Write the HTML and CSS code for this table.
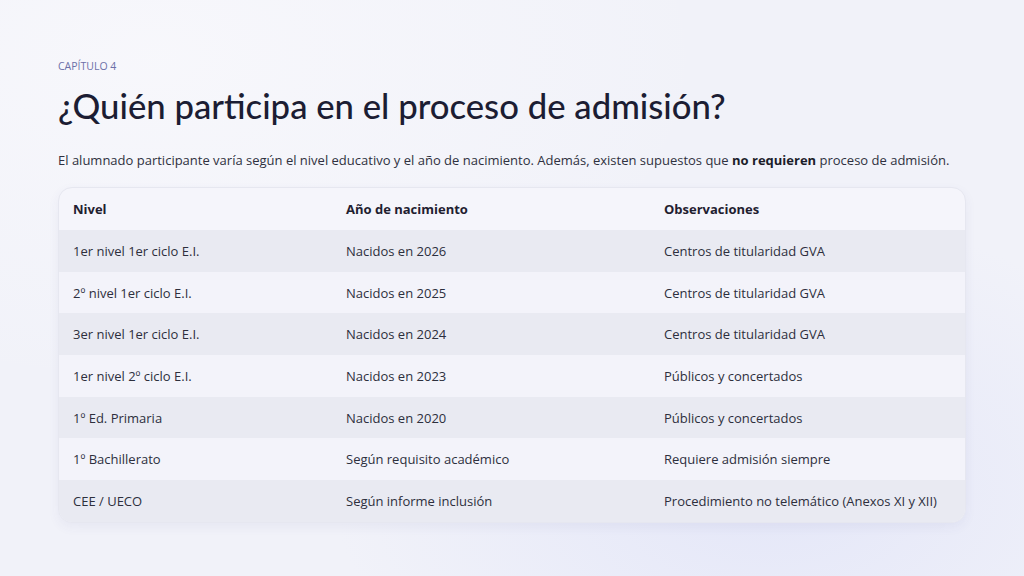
FILE: index.html
```html
<!DOCTYPE html>
<html lang="es">
<head>
<meta charset="utf-8">
<link rel="stylesheet" href="styles.css">
</head>
<body>
<main class="slide">
  <div class="chapter">CAPÍTULO 4</div>
  <h1 class="title">¿Quién participa en el proceso de admisión?</h1>
  <p class="lead">El alumnado participante varía según el nivel educativo y el año de nacimiento. Además, existen supuestos que <strong>no requieren</strong> proceso de admisión.</p>
  <div class="card">
    <table class="tbl">
      <thead>
        <tr><th class="c1">Nivel</th><th class="c2">Año de nacimiento</th><th class="c3">Observaciones</th></tr>
      </thead>
      <tbody>
        <tr><td>1er nivel 1er ciclo E.I.</td><td>Nacidos en 2026</td><td>Centros de titularidad GVA</td></tr>
        <tr><td>2º nivel 1er ciclo E.I.</td><td>Nacidos en 2025</td><td>Centros de titularidad GVA</td></tr>
        <tr><td>3er nivel 1er ciclo E.I.</td><td>Nacidos en 2024</td><td>Centros de titularidad GVA</td></tr>
        <tr><td>1er nivel 2º ciclo E.I.</td><td>Nacidos en 2023</td><td>Públicos y concertados</td></tr>
        <tr><td>1º Ed. Primaria</td><td>Nacidos en 2020</td><td>Públicos y concertados</td></tr>
        <tr><td>1º Bachillerato</td><td>Según requisito académico</td><td>Requiere admisión siempre</td></tr>
        <tr><td>CEE / UECO</td><td>Según informe inclusión</td><td>Procedimiento no telemático (Anexos XI y XII)</td></tr>
      </tbody>
    </table>
  </div>
</main>
</body>
</html>
```

FILE: styles.css
```css
html, body {
  margin: 0;
  padding: 0;
}
body {
  width: 1024px;
  height: 576px;
  overflow: hidden;
  background: #f1f2f9;
  font-family: "Open Sans", Lato, sans-serif;
  color: #2b2d3a;
}
.slide {
  padding: 59px 58px 0 58px;
  box-sizing: border-box;
  height: 576px;
  background:
    radial-gradient(ellipse at 75% 85%, rgba(225,228,248,0.8), transparent 40%),
    radial-gradient(ellipse at 15% 10%, rgba(248,248,252,0.9), transparent 45%),
    #f1f2f9;
}
.chapter {
  font-size: 10.5px;
  line-height: 14px;
  color: #6c70a8;
}
.title {
  margin: 12px 0 0 0;
  font-family: Lato, "Open Sans", sans-serif;
  font-size: 34.7px;
  line-height: 42px;
  font-weight: 500;
  color: #1c1d33;
}
.lead {
  margin: 24px 0 0 0;
  font-size: 13px;
  line-height: 18px;
  color: #2f3140;
}
.lead strong {
  font-weight: 700;
  color: #1c1d2a;
}
.card {
  margin-top: 18px;
  width: 908px;
  border-radius: 14px;
  border: 1px solid #e6e7f0;
  background: #f5f5fb;
  overflow: hidden;
  box-shadow: 0 4px 12px rgba(60, 70, 140, 0.06);
  box-sizing: border-box;
}
.tbl {
  width: 100%;
  border-collapse: collapse;
  table-layout: fixed;
  font-size: 13px;
}
.tbl th, .tbl td {
  box-sizing: border-box;
  text-align: left;
  padding: 0 14px;
  height: 41.7px;
  white-space: nowrap;
}
.tbl th {
  font-weight: 700;
  color: #1f2030;
  height: 42px;
}
.tbl td {
  color: #2d2f3d;
}
.c1 { width: 273px; }
.c2 { width: 318px; }
.tbl tbody tr:nth-child(odd) { background: #e9eaf2; }
.tbl tbody tr:nth-child(even) { background: #f3f3fa; }
```
